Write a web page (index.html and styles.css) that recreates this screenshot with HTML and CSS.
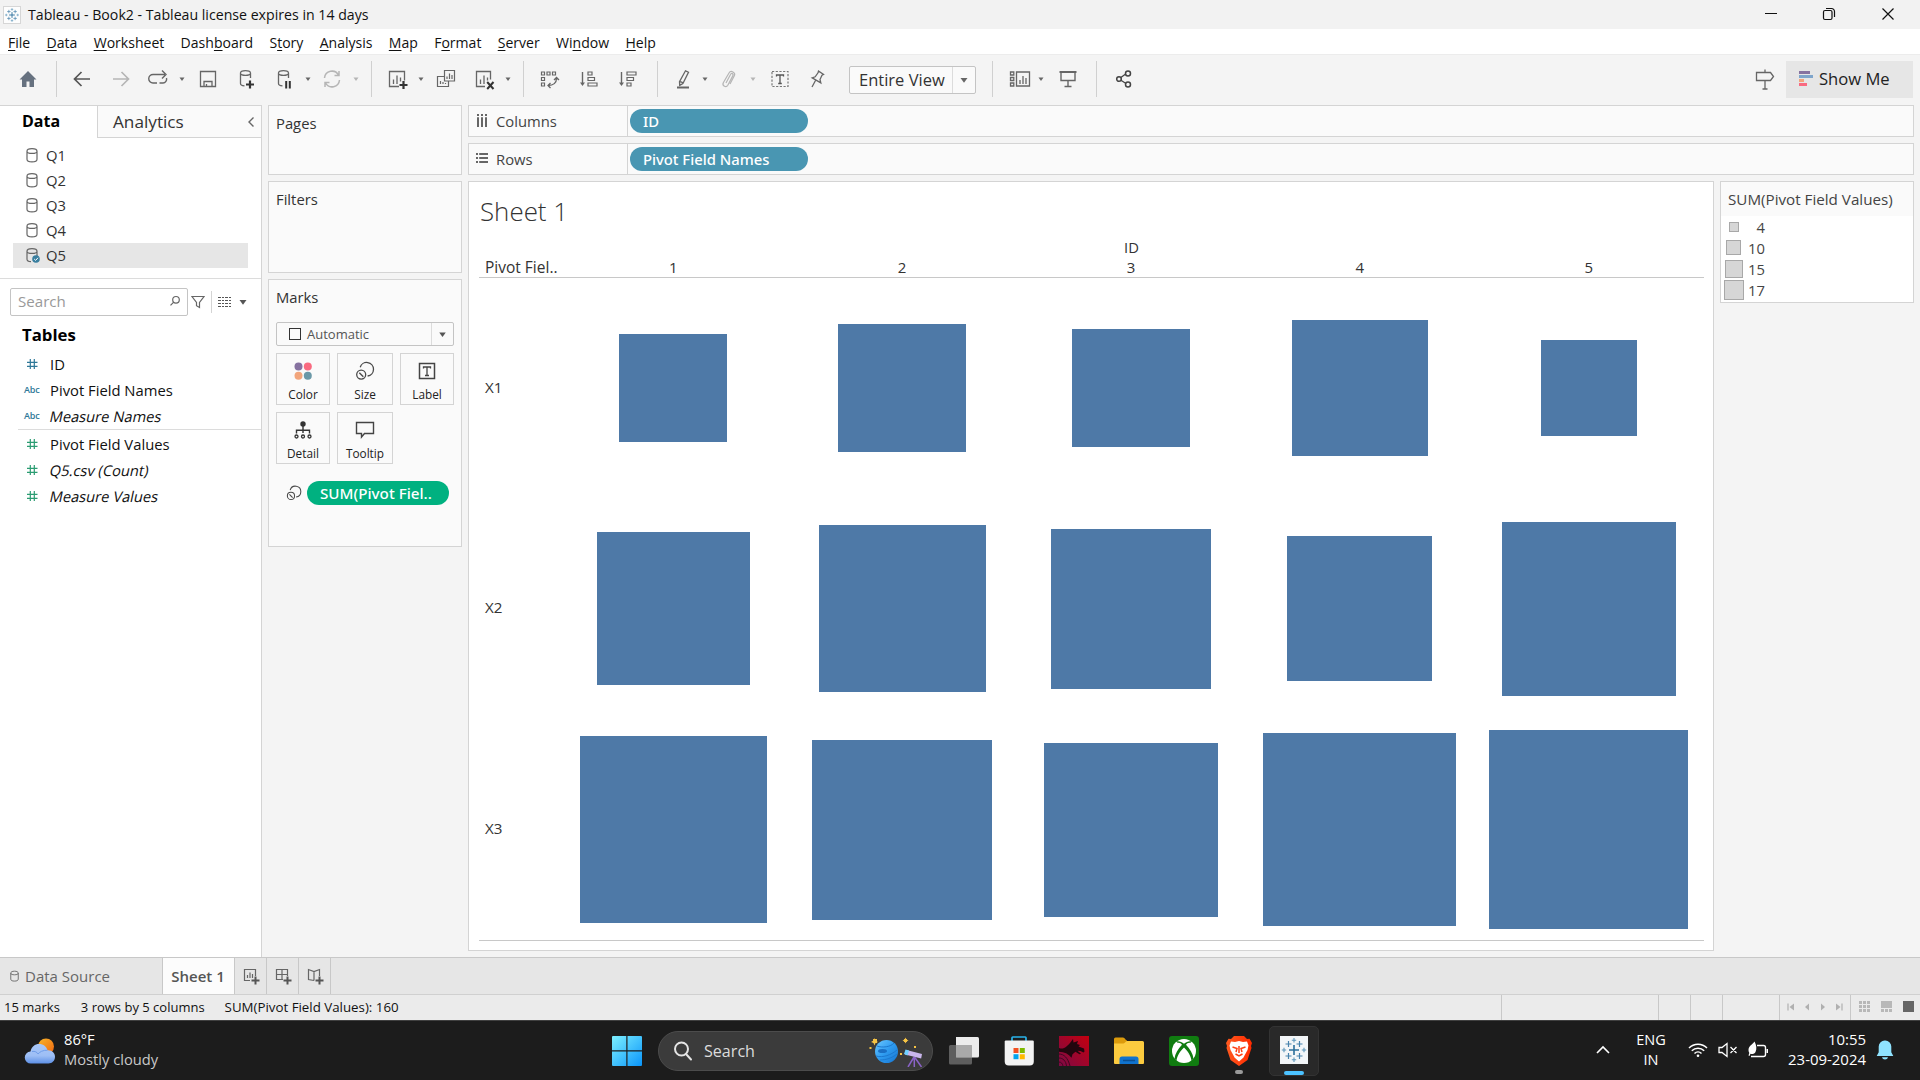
FILE: index.html
```html
<!DOCTYPE html>
<html lang="en">
<head>
<meta charset="utf-8">
<title>Tableau - Book2</title>
<link rel="stylesheet" href="styles.css">
</head>
<body>
<svg class="defs" aria-hidden="true">
  <symbol id="caret" viewBox="0 0 10 10"><path d="M2.500 3.500h5L5 7z" fill="currentColor"/></symbol>
  <symbol id="db" viewBox="0 0 12 16"><path d="M1 4.200v8c0 1.800 2 2.600 5 2.600s5-.8 5-2.600v-8C11 2.500 9 1.600 6 1.600S1 2.500 1 4.200c0 1.500 2 2.200 5 2.200s5-.7 5-2.200" fill="none" stroke="#666" stroke-width="1.200"/></symbol>
  <symbol id="dbpart" viewBox="0 0 12 16"><path d="M5 14.700c-2.500-.1-4-1-4-2.500v-8C1 2.500 3 1.600 6 1.600s5 .9 5 2.600V9M1 4.200c0 1.500 2 2.200 5 2.200s5-.7 5-2.200" fill="none" stroke="#666" stroke-width="1.200"/></symbol>
  <symbol id="hash" viewBox="0 0 12 12"><path d="M4.300 1v10M8.300 1v10M1 4.300h10.500M1 8.300h10.500" fill="none" stroke="currentColor" stroke-width="1.200"/></symbol>
  <symbol id="size" viewBox="0 0 20 20"><path d="M5.200 6.300a6.800 6.800 0 1 1 7.400 8.700" fill="none" stroke="#4a4a4a" stroke-width="1.300"/><circle cx="6.200" cy="13.600" r="4.500" fill="none" stroke="#4a4a4a" stroke-width="1.300"/><path d="M4.300 11.800l4 4" stroke="#4a4a4a" stroke-width="1.400"/></symbol>
  <symbol id="tableau" viewBox="0 0 28 28"><g fill="none"><path d="M14 9v10M9 14h10" stroke="#2b6f9b" stroke-width="1.600"/><path d="M8.500 5v6M5.500 8h6M19.500 5v6M16.500 8h6M8.500 17v6M5.500 20h6M19.500 17v6M16.500 20h6" stroke="#4682ac" stroke-width="1.200"/><path d="M14 2v4.500M11.800 4.200h4.400M14 21.500V26M11.800 23.800h4.400M4 11.800v4.400M1.800 14h4.400M24 11.800v4.400M21.800 14h4.400" stroke="#5d97bb" stroke-width="1.100"/></g></symbol>
</svg>

<header class="titlebar">
  <span class="app-icon"><svg width="16" height="16"><use href="#tableau"/></svg></span>
  <span class="title">Tableau - Book2 - Tableau license expires in 14 days</span>
  <span class="win-controls">
    <svg width="12" height="12" viewBox="0 0 12 12"><path d="M0 5.500h12" stroke="#111"/></svg>
    <svg width="14" height="14" viewBox="0 0 14 14" fill="none" stroke="#111" stroke-width="1.200"><rect x="1.500" y="3.500" width="8.500" height="9" rx="1.500"/><path d="M4 1.500h5.500a3 3 0 0 1 3 3V10"/></svg>
    <svg width="14" height="14" viewBox="0 0 14 14" stroke="#111" stroke-width="1.200"><path d="M1.500 1.500l11 11M12.500 1.500l-11 11"/></svg>
  </span>
</header>

<nav class="menubar">
  <span><u>F</u>ile</span><span><u>D</u>ata</span><span><u>W</u>orksheet</span><span>Dash<u>b</u>oard</span><span>S<u>t</u>ory</span><span><u>A</u>nalysis</span><span><u>M</u>ap</span><span>F<u>o</u>rmat</span><span><u>S</u>erver</span><span>Wi<u>n</u>dow</span><span><u>H</u>elp</span>
</nav>

<div class="toolbar">
  <div class="tb-group">
    <svg class="ic" viewBox="0 0 24 24"><path d="M12 4L3.500 12.500H6V20h4.500v-5.500h3V20H18v-7.500h2.500z" fill="#66717f"/></svg>
  </div>
  <div class="tb-group">
    <svg class="ic" viewBox="0 0 24 24"><path d="M20 12H5M11.500 5L4.500 12l7 7" fill="none" stroke="#555" stroke-width="1.700"/></svg>
    <svg class="ic off" viewBox="0 0 24 24"><path d="M4 12h15M12.500 5l7 7-7 7" fill="none" stroke="currentColor" stroke-width="1.700"/></svg>
    <svg class="ic g13" viewBox="0 0 24 24"><path d="M11 16H7a4.200 4.200 0 0 1 0-8.500h12M16 3.500l4 4-4 4M13.500 16H17a4 4 0 0 0 3.500-5" fill="none" stroke="#666" stroke-width="1.400"/></svg>
    <svg class="car"><use href="#caret"/></svg>
    <svg class="ic g9" viewBox="0 0 24 24"><path d="M4.500 4.500h15v15h-15zM8 19.500v-5h8v5M10.500 19.500V17" fill="none" stroke="#666" stroke-width="1.300"/></svg>
    <svg class="ic g14" viewBox="0 0 24 24"><path d="M16.500 11V6c0-3.200-10-3.200-10 0v10.500c0 1.700 1.600 2.200 4 2.400M6.500 6.500c1 2.500 9 2.500 10 0" fill="none" stroke="#666" stroke-width="1.300"/><path d="M16 13.500v8M12 17.500h8" stroke="#333" stroke-width="2.200"/></svg>
    <svg class="ic g14" viewBox="0 0 24 24"><path d="M16.500 11V6c0-3.200-10-3.200-10 0v10.500c0 1.700 1.600 2.200 4 2.400M6.500 6.500c1 2.500 9 2.500 10 0" fill="none" stroke="#666" stroke-width="1.300"/><path d="M14.200 14v7.500M17.800 14v7.500" stroke="#333" stroke-width="2"/></svg>
    <svg class="car"><use href="#caret"/></svg>
    <svg class="ic g7 off" viewBox="0 0 24 24"><path d="M4.500 11a7.500 7.500 0 0 1 14-3M19.500 13a7.500 7.500 0 0 1-14 3M19 4v4.500h-4.500M5 20v-4.500h4.500" fill="none" stroke="currentColor" stroke-width="1.500"/></svg>
    <svg class="car off"><use href="#caret"/></svg>
  </div>
  <div class="tb-group g10">
    <svg class="ic" viewBox="0 0 24 24"><path d="M14 19.500H4.500v-15h15v9M8.500 12.500V17M12 8.500V17M15.500 10.500v4" fill="none" stroke="#666" stroke-width="1.300"/><path d="M18.500 14v8M14.500 18h8" stroke="#333" stroke-width="2.200"/></svg>
    <svg class="car"><use href="#caret"/></svg>
    <svg class="ic g8" viewBox="0 0 24 24"><path d="M10.500 3.500h10v10.500h-10zM10.500 9.500h-7v10h11V14M13 9.500V12M15.500 6.500V12M18 8V12M6.500 14v3M9 15v2M11.500 16v1" fill="none" stroke="#666" stroke-width="1.200"/></svg>
    <svg class="ic g14" viewBox="0 0 24 24"><path d="M13 19.500H4.500v-15h14v8M8.500 12.500V17M12 8.500V17M15.500 10.500v3" fill="none" stroke="#666" stroke-width="1.300"/><path d="M15.200 15l6.300 7M21.500 15l-6.300 7" stroke="#333" stroke-width="2"/></svg>
    <svg class="car"><use href="#caret"/></svg>
  </div>
  <div class="tb-group g10">
    <svg class="ic" viewBox="0 0 24 24"><path d="M4.500 5h3v3h-3zM10 5h3v3h-3zM15.500 5h3v3h-3zM4.500 10.500h3v3h-3zM4.500 16h3v3h-3z" fill="none" stroke="#666" stroke-width="1.200"/><path d="M19.500 11.500c0 4-3 7-8.500 7M17 13l2.500-2.500L22 13M13.500 16L11 18.500l2.500 2.500" fill="none" stroke="#666" stroke-width="1.300"/></svg>
    <svg class="ic g16" viewBox="0 0 24 24"><path d="M5.500 5v12" stroke="#666" stroke-width="1.400"/><path d="M3 15.500h5L5.500 19z" fill="#666"/><path d="M11 5h4v3h-4zM11 10.500h6.500v3H11zM11 16h9v3h-9z" fill="none" stroke="#666" stroke-width="1.200"/></svg>
    <svg class="ic g15" viewBox="0 0 24 24"><path d="M5.500 5v12" stroke="#666" stroke-width="1.400"/><path d="M3 15.500h5L5.500 19z" fill="#666"/><path d="M11 5h9v3h-9zM11 10.500h6.500v3H11zM11 16h4v3h-4z" fill="none" stroke="#666" stroke-width="1.200"/></svg>
  </div>
  <div class="tb-group g17b">
    <svg class="ic" viewBox="0 0 24 24"><path d="M14.500 3.800l3 1.400-5.600 11.300-3.200 1.800-.2-3.600zM8.700 14.300l3 1.400" fill="none" stroke="#666" stroke-width="1.300"/><path d="M6 20.500h12" stroke="#666" stroke-width="2"/></svg>
    <svg class="car g5"><use href="#caret"/></svg>
    <svg class="ic g7 off" viewBox="0 0 24 24"><path d="M9 16l4.500-8.500c1-2 3.300-.8 2.300 1.200l-5 9.500c-1.600 2.800-6 .7-4.500-2.400L12 6c1.800-3.200 7-.6 5.300 2.800L13 17" fill="none" stroke="currentColor" stroke-width="1.200"/></svg>
    <svg class="car off"><use href="#caret"/></svg>
    <svg class="ic g10" viewBox="0 0 24 24"><path d="M4 4.500h16v15H4z" fill="none" stroke="#777" stroke-width="1.200" stroke-dasharray="2.200 1.500"/><path d="M8.500 9.500V8h7v1.500M12 8v8.500M10.200 16.500h3.600" fill="none" stroke="#555" stroke-width="1.300"/></svg>
    <svg class="ic g13" viewBox="0 0 24 24"><path d="M13.500 4l5 3.500-1.500.7-2 4.300.8 3.300-8.600-5 3-1 2.800-4zM10.500 13.500L7 20" fill="none" stroke="#666" stroke-width="1.300"/></svg>
    <div class="fit-select"><span>Entire View</span><i><svg width="14" height="14"><use href="#caret"/></svg></i></div>
  </div>
  <div class="tb-group g17">
    <svg class="ic" viewBox="0 0 24 24"><path d="M2.500 5h3.300v3H2.500zM2.500 10.500h3.300v3H2.500zM2.500 16h3.300v3H2.500zM8.500 5h13v14h-13zM12 13v4M15 9v8M18 11v6" fill="none" stroke="#666" stroke-width="1.300"/></svg>
    <svg class="car g4"><use href="#caret"/></svg>
    <svg class="ic g10" viewBox="0 0 24 24"><path d="M3.500 5h17" stroke="#666" stroke-width="2"/><path d="M5 5.500v8h14v-8M12 13.500V19M8.500 19.500h7" fill="none" stroke="#666" stroke-width="1.400"/></svg>
  </div>
  <div class="tb-group g17">
    <svg class="ic" viewBox="0 0 24 24"><path d="M8.500 10.700l5.500-4M8.500 13l5.500 3.500" stroke="#444" stroke-width="1.300"/><g fill="none" stroke="#444" stroke-width="1.500"><circle cx="7" cy="12" r="2.300"/><circle cx="16" cy="6.500" r="2.500"/><circle cx="16" cy="17.500" r="2.500"/></g></svg>
  </div>
  <svg class="ic guide" viewBox="0 0 24 24"><path d="M3.500 5.500h14l3 4-3 4h-14zM12 2.500v3M12 13.500V22M9.500 22h5" fill="none" stroke="#666" stroke-width="1.300"/></svg>
  <div class="show-me">
    <svg width="14" height="16" viewBox="0 0 14 16"><path d="M0 0h11v3H0z" fill="#8672a0"/><path d="M0 4h14v3H0z" fill="#7fa5cb"/><path d="M0 8h5v3H0z" fill="#f2a57c"/><path d="M0 12h8v3H0z" fill="#f96a80"/></svg>
    <span>Show Me</span>
  </div>
</div>

<main class="workspace">
  <aside class="data-pane">
    <div class="pane-tabs"><b>Data</b><div class="tab-analytics">Analytics<svg width="8" height="12" viewBox="0 0 8 12"><path d="M6.500 1.500L2 6l4.500 4.500" fill="none" stroke="#666" stroke-width="1.400"/></svg></div></div>
    <ul class="sources">
      <li><svg class="dbi"><use href="#db"/></svg>Q1</li>
      <li><svg class="dbi"><use href="#db"/></svg>Q2</li>
      <li><svg class="dbi"><use href="#db"/></svg>Q3</li>
      <li><svg class="dbi"><use href="#db"/></svg>Q4</li>
      <li class="sel"><svg class="dbi"><use href="#dbpart"/></svg>Q5<svg class="badge" viewBox="0 0 10 10"><circle cx="5" cy="5" r="3.800" fill="#3a7f9f"/><path d="M3.200 5l1.400 1.400L7 3.800" fill="none" stroke="#fff"/></svg></li>
    </ul>
    <div class="search-row">
      <div class="search"><span>Search</span><svg width="12" height="12" viewBox="0 0 12 12" fill="none" stroke="#666" stroke-width="1.200"><circle cx="7" cy="4.800" r="3.300"/><path d="M4.700 7.100L1.500 10.300"/></svg></div>
      <svg class="funnel" width="14" height="14" viewBox="0 0 14 14"><path d="M1 1.500h12L8.500 7.500v5l-3-1.800V7.500z" fill="none" stroke="#666" stroke-width="1.200"/></svg>
      <svg class="list" width="13" height="10" viewBox="0 0 13 10"><path d="M0 .5h13M0 3.500h13M0 6.500h13M0 9.500h13" stroke="#555" stroke-dasharray="3 1 2 1"/></svg>
      <svg class="lc" width="14" height="14"><use href="#caret"/></svg>
    </div>
    <h3>Tables</h3>
    <ul class="fields dims">
      <li><svg class="hash"><use href="#hash"/></svg>ID</li>
      <li><small>Abc</small>Pivot Field Names</li>
      <li><small>Abc</small><em>Measure Names</em></li>
    </ul>
    <ul class="fields meas">
      <li><svg class="hash"><use href="#hash"/></svg>Pivot Field Values</li>
      <li><svg class="hash"><use href="#hash"/></svg><em>Q5.csv (Count)</em></li>
      <li><svg class="hash"><use href="#hash"/></svg><em>Measure Values</em></li>
    </ul>
  </aside>

  <section class="cards">
    <div class="card pages">Pages</div>
    <div class="card filters">Filters</div>
    <div class="card marks">
      <div>Marks</div>
      <div class="mark-type"><i class="sq"></i><span>Automatic</span><i class="dd"><svg width="13" height="13"><use href="#caret"/></svg></i></div>
      <div class="mark-buttons">
        <div><svg viewBox="0 0 20 20"><circle cx="5.500" cy="5.500" r="4" fill="#8672a0"/><circle cx="14.800" cy="5.500" r="4" fill="#f96a80"/><circle cx="5.500" cy="14.700" r="4" fill="#f2a57c"/><circle cx="14.800" cy="14.700" r="4" fill="#6b98a7"/></svg>Color</div>
        <div><svg><use href="#size"/></svg>Size</div>
        <div><svg viewBox="0 0 20 20"><path d="M2.500 2.500h15v15h-15z" fill="none" stroke="#444" stroke-width="1.500"/><path d="M6.500 7.500V6h7v1.500M10 6v8.500M8 14.500h4" fill="none" stroke="#444" stroke-width="1.300"/></svg>Label</div>
        <div><svg viewBox="0 0 20 20"><circle cx="10" cy="4" r="2.700" fill="#333"/><path d="M10 6v7M3.500 13.500v-3.200h13v3.200" fill="none" stroke="#333" stroke-width="1.400"/><g fill="none" stroke="#333" stroke-width="1.300"><circle cx="3.500" cy="16.500" r="1.500"/><circle cx="10" cy="16.500" r="1.500"/><circle cx="16.500" cy="16.500" r="1.500"/></g></svg>Detail</div>
        <div><svg viewBox="0 0 20 20"><path d="M1.500 2.500h17v11h-9L6.500 17v-3.500h-5z" fill="none" stroke="#444" stroke-width="1.400"/></svg>Tooltip</div>
      </div>
      <div class="encoding"><svg><use href="#size"/></svg><span class="pill green">SUM(Pivot Fiel..</span></div>
    </div>
  </section>

  <section class="main">
    <div class="shelf"><div class="shelf-name"><svg width="12" height="14" viewBox="0 0 12 14"><path d="M2 0v2M6 0v2M10 0v2M2 3.200V13M6 3.200V13M10 3.200V13" stroke="#666" stroke-width="2"/></svg>Columns</div><span class="pill">ID</span></div>
    <div class="shelf"><div class="shelf-name"><svg width="12" height="12" viewBox="0 0 12 12"><path d="M0 1h2M0 5h2M0 9h2M3.200 1H12M3.200 5H12M3.200 9H12" stroke="#666" stroke-width="2"/></svg>Rows</div><span class="pill">Pivot Field Names</span></div>
    <div class="view-row">
      <div class="viz">
        <h1>Sheet 1</h1>
        <div class="col-title">ID</div>
        <div class="crosstab head"><span class="rh">Pivot Fiel..</span><span>1</span><span>2</span><span>3</span><span>4</span><span>5</span></div>
        <div class="crosstab body">
          <span class="rh">X1</span>
          <div><i style="width:108px"></i></div><div><i style="width:128px"></i></div><div><i style="width:118px"></i></div><div><i style="width:136px"></i></div><div><i style="width:96px"></i></div>
          <span class="rh">X2</span>
          <div><i style="width:153px"></i></div><div><i style="width:167px"></i></div><div><i style="width:160px"></i></div><div><i style="width:145px"></i></div><div><i style="width:174px"></i></div>
          <span class="rh">X3</span>
          <div><i style="width:187px"></i></div><div><i style="width:180px"></i></div><div><i style="width:174px"></i></div><div><i style="width:193px"></i></div><div><i style="width:199px"></i></div>
        </div>
      </div>
      <div class="legend">
        <div class="legend-title">SUM(Pivot Field Values)</div>
        <ul>
          <li><span><i style="width:10px"></i></span><b>4</b></li>
          <li><span><i style="width:15px"></i></span><b>10</b></li>
          <li><span><i style="width:18px"></i></span><b>15</b></li>
          <li><span><i style="width:20px"></i></span><b>17</b></li>
        </ul>
      </div>
    </div>
  </section>
</main>

<div class="sheet-tabs">
  <div class="ds"><svg width="9" height="12"><use href="#db"/></svg>Data Source</div>
  <div class="active">Sheet 1</div>
  <div class="new"><svg viewBox="0 0 18 18"><path d="M8 13.500H2.500v-11h11V9M5.500 8v3M8 5.500V11M10.500 7v4" fill="none" stroke="#666" stroke-width="1.200"/><path d="M13.500 9.500v8M9.500 13.500h8" stroke="#555" stroke-width="2"/></svg></div>
  <div class="new"><svg viewBox="0 0 18 18"><path d="M9 12.500H2.500v-10h11V9M2.500 7.500h11M8 2.500v10" fill="none" stroke="#666" stroke-width="1.200"/><path d="M13.500 9.500v8M9.500 13.500h8" stroke="#555" stroke-width="2"/></svg></div>
  <div class="new"><svg viewBox="0 0 18 18"><path d="M8 13.500l-5.500-1v-10L8 4.500l5.500-2V9M8 4.500v9" fill="none" stroke="#666" stroke-width="1.200"/><path d="M13.500 9.500v8M9.500 13.500h8" stroke="#555" stroke-width="2"/></svg></div>
</div>

<footer class="status">
  <span>15 marks</span><span>3 rows by 5 columns</span><span>SUM(Pivot Field Values): 160</span>
  <div class="cells">
    <i class="c1"></i><i class="c2"></i><i class="c2"></i><i class="c3"></i>
    <div class="nav">
      <svg viewBox="0 0 8 8"><path d="M1 .5v7" stroke="#b0b0b0" stroke-width="1.200"/><path d="M7 .5v7L2.500 4z" fill="#b0b0b0"/></svg>
      <svg viewBox="0 0 8 8"><path d="M6 .5v7L2 4z" fill="#b0b0b0"/></svg>
      <svg viewBox="0 0 8 8"><path d="M2 .5v7L6 4z" fill="#b0b0b0"/></svg>
      <svg viewBox="0 0 8 8"><path d="M7 .5v7" stroke="#b0b0b0" stroke-width="1.200"/><path d="M1 .5v7L5.500 4z" fill="#b0b0b0"/></svg>
    </div>
    <div class="views">
      <svg viewBox="0 0 11 11"><path d="M0 1.500h11M0 5.500h11M0 9.500h11" stroke="#b8b8b8" stroke-width="3" stroke-dasharray="3 1"/></svg>
      <svg viewBox="0 0 11 11"><path d="M0 0h11v7H0z" fill="#b8b8b8"/><path d="M0 9.500h11" stroke="#b8b8b8" stroke-width="3" stroke-dasharray="3 1"/></svg>
      <svg viewBox="0 0 11 11"><path d="M0 0h11v11H0z" fill="#666"/></svg>
    </div>
  </div>
</footer>

<div class="taskbar">
  <div class="weather">
    <svg width="32" height="28" viewBox="0 0 32 28"><defs><linearGradient id="sun" x1="0" y1="0" x2="1" y2="1"><stop offset="0" stop-color="#f7b52b"/><stop offset="1" stop-color="#f0660f"/></linearGradient><linearGradient id="cl" x1="0" y1="0" x2="0" y2="1"><stop offset="0" stop-color="#a9c7f8"/><stop offset=".6" stop-color="#9dbef5"/><stop offset="1" stop-color="#5d90e6"/></linearGradient></defs><circle cx="22" cy="9.500" r="8" fill="url(#sun)"/><path d="M7 26.500a6 6 0 0 1-.5-12C7.500 9.500 11 7 15 7c4.500 0 7.500 2.700 8.500 6.200 4.500-.4 7.500 2.800 7.500 6.600 0 4-3 6.700-6.500 6.700z" fill="url(#cl)"/><path d="M8 14.500c3-.5 5 .5 6 2.500 1.500-2 5-4 9.500-3.800" fill="none" stroke="#6f9de9"/></svg>
    <div class="readout"><div>86°F</div><div class="cond">Mostly cloudy</div></div>
  </div>
  <div class="apps">
    <svg width="30" height="30" viewBox="0 0 30 30"><defs><linearGradient id="w" x1="0" y1="0" x2="1" y2="1"><stop offset="0" stop-color="#7df0ff"/><stop offset="1" stop-color="#0a95fa"/></linearGradient></defs><path d="M1 0h13.300v14.300H0V1a1 1 0 0 1 1-1zM15.500 0H29a1 1 0 0 1 1 1v13.300H15.500zM0 15.500h14.300V30H1a1 1 0 0 1-1-1zM15.500 15.500H30V29a1 1 0 0 1-1 1H15.500z" fill="url(#w)"/></svg>
    <div class="tsearch">
      <svg width="20" height="20" viewBox="0 0 20 20" fill="none" stroke="#e4e4e4" stroke-width="2"><circle cx="8.500" cy="8" r="6.500"/><path d="M13 13l5 5.500" stroke-linecap="round"/></svg>
      <span>Search</span>
      <svg class="deco" width="56" height="32" viewBox="0 0 56 32"><defs><linearGradient id="pl" x1="0" y1="0" x2="1" y2="1"><stop offset="0" stop-color="#6cc8ff"/><stop offset=".5" stop-color="#2e9bf0"/><stop offset="1" stop-color="#1673cf"/></linearGradient></defs><circle cx="18.500" cy="16.500" r="11.500" fill="url(#pl)"/><path d="M9 11c5 2 14 1 17-3M8 21c7 2 15-1 21-6M12 25c6 0 12-2 17-6" fill="none" stroke="#1b78cf" stroke-width="1"/><ellipse cx="14.500" cy="16" rx="4.500" ry="2" fill="#1a6fc4"/><path d="M5 4h4v4H5zM36 4h3v3h-3zM46 11h2v2h-2zM32 18h2v2h-2zM1.500 12h2v2h-2z" fill="#f6c344"/><path d="M6.500 3l1 2.500L10 7l-2.500 1-1 2.500-1-2.500L3 7l2.500-1.500zM37.500 2.500l1 2 2 1-2 1-1 2-1-2-2-1 2-1z" fill="#f6c344"/><path d="M46 22l-6 10M46.500 22l7 10M46.300 22v10" stroke="#8a63c7" stroke-width="1.500"/><path d="M38.500 15l15.500 4-.8 4.500-16.200-4z" fill="#c9b6ec"/><path d="M37.500 14.500l3.500 1-1.500 5-3.500-1.500z" fill="#6fd0ff"/></svg>
    </div>
    <svg width="30" height="28" viewBox="0 0 30 28"><path d="M8.500 0h20a1.500 1.500 0 0 1 1.500 1.500V19a1.500 1.500 0 0 1-1.500 1.500h-20A1.500 1.500 0 0 1 7 19V0z" fill="#ececec"/><path d="M1.500 8h20A1.500 1.500 0 0 1 23 9.500V26a1.500 1.500 0 0 1-1.500 1.500h-20A1.500 1.500 0 0 1 0 26V9.500A1.500 1.500 0 0 1 1.500 8z" fill="#6f6f6f" fill-opacity=".8"/><path d="M7 8h15a1 1 0 0 1 1 1v11.500H7z" fill="#a9a9a9"/></svg>
    <svg class="t25" width="30" height="30" viewBox="0 0 30 30"><path d="M8 6V1.800A.8.8 0 0 1 8.800 1h12.400a.8.8 0 0 1 .8.800V6" fill="none" stroke="#29b3ea" stroke-width="1.700"/><path d="M1.500 4.500h27A1.300 1.300 0 0 1 29.800 6v19.500a4 4 0 0 1-4 4H4.700a4 4 0 0 1-4-4V6a1.300 1.300 0 0 1 .8-1.500z" fill="#f3f3f3"/><path d="M9.500 12h5v5h-5z" fill="#f25022"/><path d="M15.800 12h5v5h-5z" fill="#7fba00"/><path d="M9.500 18.200h5v5h-5z" fill="#00a4ef"/><path d="M15.800 18.200h5v5h-5z" fill="#ffb900"/></svg>
    <svg class="t25" width="30" height="30" viewBox="0 0 30 30"><defs><linearGradient id="dr" x1="1" y1="0" x2="0" y2="1"><stop offset="0" stop-color="#c4000f"/><stop offset="1" stop-color="#7d0a45"/></linearGradient></defs><path d="M0 0h30v30H0z" fill="url(#dr)"/><path d="M0 12c5 2 8-2 11-5l3-4 .5 3.500L19 5l-1 3 3 1-1.500 1.500 5.500 2 .5 3-1 1-3-1.500-3-.3 3.500 3-1.500.5-4-2.500-3 2.500-1 3.500c-3-4-7-6-12.500-6z" fill="#22060e"/><path d="M0 18c5 0 9 4 11 12M0 22c4 0 7 3 7.500 8M0 26c2 0 3.500 1.500 4 4" fill="none" stroke="#3f0820"/></svg>
    <svg class="t25" width="30" height="28" viewBox="0 0 30 28"><path d="M0 2a1.500 1.500 0 0 1 1.500-1.500H9c2 0 2.500 3 4 3v5H0z" fill="#dc9b0c"/><path d="M0 6.500h9.500c1.500 0 2-2.500 3.500-2.500h15.500A1.500 1.500 0 0 1 30 5.500V26a1 1 0 0 1-1 1H1a1 1 0 0 1-1-1z" fill="#fccb3f"/><path d="M5.500 27v-5a2.500 2.500 0 0 1 2.500-2.500h14a2.500 2.500 0 0 1 2.500 2.500v5z" fill="#1073ce"/><path d="M9 23.500h12" stroke="#0a4f93" stroke-width="1.500"/></svg>
    <svg class="t25" width="30" height="30" viewBox="0 0 30 30"><rect width="30" height="30" rx="3" fill="#107c10"/><circle cx="15" cy="15" r="12" fill="#fff"/><path d="M7 5.500c3-1 5.500.5 8 2.300 2.500-1.800 5-3.300 8-2.300l-2 1.500c-1.500-.5-3 .5-4 1.800 4 4 7 9 7.500 14l-2 2C22 20 19 15 15 11.500 11 15 8 20 7.500 24.800l-2-2C6 17.800 9 12.800 13 8.800 12 7.500 10.500 6.500 9 7z" fill="#107c10"/></svg>
    <div class="brave"><svg width="26" height="30" viewBox="0 0 26 30"><defs><linearGradient id="br"><stop offset="0" stop-color="#ff5a1f"/><stop offset="1" stop-color="#ff2a00"/></linearGradient></defs><path d="M8 0h10l3 3 2.500-.3L26 7l-1 3 .5 2-4 12-8.500 6-8.500-6-4-12 .5-2L0 7l2.500-4.300L5 3z" fill="url(#br)"/><path d="M5 5.500l4 .5 4-1 4 1 4-.5 1.500 4-1 4.500-3 5.500-1 2L13 25.500 8.500 21.500l-1-2-3-5.500-1-4.500z" fill="#fff"/><path d="M6.500 11l4.500 1.500L10 16M19.500 11L15 12.500l1 3.500M13 10v7M9.500 18l3.500 2 3.500-2" fill="none" stroke="#ff4014" stroke-width="1.500"/></svg><i></i></div>
    <div class="tile"><span><svg width="28" height="28"><use href="#tableau"/></svg></span><i></i></div>
  </div>
  <div class="tray">
    <svg width="14" height="10" viewBox="0 0 14 10"><path d="M1 8l6-6 6 6" fill="none" stroke="#fff" stroke-width="1.600"/></svg>
    <div class="lang">ENG<br>IN</div>
    <svg class="wifi" width="20" height="16" viewBox="0 0 20 16" fill="none" stroke="#fff" stroke-width="1.500"><path d="M1 6a12.500 12.500 0 0 1 18 0M3.800 8.800a8.700 8.700 0 0 1 12.400 0M6.500 11.500a5 5 0 0 1 7 0"/><circle cx="10" cy="13.800" r="1.300" fill="#fff" stroke="none"/></svg>
    <svg class="mute" width="20" height="16" viewBox="0 0 20 16" fill="none" stroke="#fff" stroke-width="1.300"><path d="M1 5.500h3L9 1.500v13l-5-4H1zM12.500 5l6 6M18.500 5l-6 6"/></svg>
    <svg width="22" height="18" viewBox="0 0 22 18"><path d="M10 4.500h6.500a2 2 0 0 1 2 2v7a2 2 0 0 1-2 2H4" fill="none" stroke="#fff" stroke-width="1.400"/><path d="M19.500 8h1.500v4h-1.500zM1.500 9C1.500 5 5 4 7.500.5 9.500 4 10 8 8.500 11c-1 2-3.500 2.500-5 1.700L2.500 15 1.500 14.500l.8-2.500c-.6-.8-.8-2-.8-3z" fill="#fff"/></svg>
    <div class="clock">10:55<br>23-09-2024</div>
    <svg width="18" height="20" viewBox="0 0 18 20"><path d="M9 .5a6 6 0 0 1 6.300 6v5.800l2 3.700H.7l2-3.700V6.500A6 6 0 0 1 9 .5zM6 17.300h6c-.5 1.500-1.500 2.200-3 2.200s-2.500-.7-3-2.200z" fill="#8fe3ff"/></svg>
  </div>
</div>
</body>
</html>
```
FILE: styles.css
```css
* { box-sizing: border-box; }
body {
  margin: 0;
  width: 1920px;
  height: 1080px;
  overflow: hidden;
  display: flex;
  flex-direction: column;
  background: #f4f4f4;
  color: #333;
  font: 400 14.8px/20px "Open Sans", "Noto Sans", sans-serif;
}
ul { list-style: none; margin: 0; padding: 0; }
svg { flex: none; display: block; }
i { display: block; }
.defs { width: 0; height: 0; position: absolute; }

/* title bar and menus */
.titlebar { height: 29px; background: #f2f2f2; display: flex; align-items: center; padding: 0 25px 0 3px; flex: none; color: #111; }
.app-icon { width: 18px; height: 18px; background: #fdfdfd; border: 1px solid #d6d6d6; margin-right: 7px; }
.title { font-size: 14.15px; }
.win-controls { margin-left: auto; display: flex; gap: 45px; align-items: center; padding-bottom: 1px; }
.menubar { height: 25px; background: #fff; display: flex; align-items: center; gap: 16.3px; padding: 2px 8px 0; flex: none; color: #111; font-size: 14.05px; }
.menubar u { text-underline-offset: 2px; }

/* toolbar */
.toolbar { height: 51px; flex: none; display: flex; align-items: center; border-top: 1px solid #ececec; padding: 0 7px 2px 0; }
.ic { width: 24px; height: 24px; }
.ic.off, .car.off { color: #b5b5b5; }
.car { width: 10px; height: 10px; color: #666; margin-left: 7px; }
.tb-group { display: flex; align-items: center; padding-left: 13px; margin-left: 13px; height: 36px; border-left: 1px solid #d0d0d0; }
.tb-group:first-child { border: 0; margin-left: 3px; }
.tb-group:first-child + .tb-group { margin-left: 16px; }
.tb-group.g10 { margin-left: 10px; }
.tb-group.g17 { margin-left: 16px; padding-left: 15px; }
.tb-group.g17b { margin-left: 17px; }
.ic + .ic { margin-left: 15px; }
.ic.g7 { margin-left: 7px; }
.ic.g8 { margin-left: 8px; }
.ic.g9 { margin-left: 9px; }
.ic.g10 { margin-left: 10px; }
.ic.g13 { margin-left: 13px; }
.ic.g14 { margin-left: 14px; }
.ic.g15 { margin-left: 15px; }
.ic.g16 { margin-left: 16px; }
.car.g5 { margin-left: 5px; }
.car.g4 { margin-left: 4px; }
.fit-select { display: flex; align-items: center; width: 127px; height: 28px; margin: 1px 0 0 20px; border: 1px solid #c4c4c4; border-radius: 2px; background: #fafafa; padding-left: 9px; font-size: 16.5px; white-space: nowrap; }
.fit-select i { margin-left: auto; width: 23px; height: 26px; border-left: 1px solid #dcdcdc; display: flex; align-items: center; justify-content: center; color: #666; }
.guide { margin-left: auto; margin-right: 9px; }
.show-me { width: 127px; height: 37px; background: #e6e6e6; display: flex; align-items: center; gap: 6px; padding-left: 13px; color: #222; font-size: 16.6px; }

/* workspace */
.workspace { flex: none; height: 852px; display: flex; }
.data-pane { width: 262px; background: #fff; border: 1px solid #d4d4d4; border-width: 1px 1px 0 0; color: #111; }
.pane-tabs { height: 32px; display: flex; }
.pane-tabs b { width: 97px; padding: 5px 0 0 22px; font-size: 16px; color: #000; }
.tab-analytics { flex: 1; border: 1px solid #d4d4d4; border-width: 0 0 1px 1px; background: #fafafa; display: flex; align-items: center; justify-content: space-between; padding: 0 6px 0 15px; font-size: 17.2px; color: #333; }
.sources { padding: 5px 13px 10px 13px; border-bottom: 1px solid #dcdcdc; color: #333; }
.sources li { position: relative; height: 25px; display: flex; align-items: center; gap: 8px; padding: 0 0 2px 13px; }
.sources .sel { background: #e6e6e6; }
.dbi { width: 12px; height: 16px; }
.badge { position: absolute; left: 18px; top: 11px; width: 10px; height: 10px; }
.search-row { display: flex; align-items: center; padding: 9px 0 0 10px; height: 37px; }
.search { width: 178px; height: 28px; border: 1px solid #c4c4c4; border-radius: 2px; display: flex; align-items: center; justify-content: space-between; padding: 0 6px 2px 7px; color: #999; font-size: 15.1px; }
.funnel { margin: 0 6px 0 3px; }
.list { box-sizing: content-box; border-left: 1px solid #d4d4d4; padding: 6px 0 6px 6px; }
.lc { color: #555; margin-left: 5px; }
.data-pane h3 { margin: 9px 0 6px 22px; font-size: 16.8px; line-height: 20px; color: #000; }
.fields li { height: 26px; display: flex; align-items: center; padding-left: 24px; }
.fields .hash { width: 12px; height: 12px; margin: 0 12px 0 2px; }
.fields small { width: 26px; font-size: 9px; font-weight: 600; letter-spacing: -.2px; }
.fields em { font-style: normal; transform: skewX(-12deg); font-size: 14.7px; }
.dims .hash, .dims small { color: #2f7898; }
.meas .hash { color: #2b9c72; }
.meas { border-top: 1px solid #dcdcdc; margin-left: 18px; padding-top: 1px; }
.meas li { padding-left: 6px; }

.cards { width: 194px; margin-left: 6px; display: flex; flex-direction: column; gap: 6px; }
.card { background: #fafafa; border: 1px solid #d4d4d4; padding: 7px 7px 0; }
.pages { height: 70px; }
.filters { height: 92px; }
.marks { height: 268px; }
.mark-type { margin-top: 15px; height: 24px; border: 1px solid #c4c4c4; border-radius: 2px; display: flex; align-items: center; padding-left: 12px; font-size: 13px; color: #555; }
.mark-type .sq { width: 12px; height: 12px; border: 1px solid #333; margin-right: 6px; }
.mark-type .dd { margin-left: auto; width: 22px; height: 22px; border-left: 1px solid #dcdcdc; display: flex; align-items: center; justify-content: center; }
.mark-buttons { margin-top: 7px; display: grid; grid-template: 52px 52px / 54px 56px 54px; gap: 7px; font-size: 11.8px; line-height: 16px; color: #222; }
.mark-buttons div { border: 1px solid #d4d4d4; display: flex; flex-direction: column; align-items: center; padding-top: 7px; gap: 5px; }
.mark-buttons svg { width: 20px; height: 20px; }
.encoding { display: flex; align-items: center; margin: 17px 0 0 10px; gap: 5px; }
.encoding svg { width: 16px; height: 16px; }
.pill { height: 24px; width: 178px; border-radius: 12px; background: #4996b2; color: #fff; padding: 0 13px; line-height: 24px; font-family: "Noto Sans", sans-serif; font-weight: 500; font-size: 14.8px; white-space: nowrap; }
.pill.green { background: #00b180; width: 142px; font-size: 15.2px; }

.main { flex: 1; margin: 0 6px; display: flex; flex-direction: column; gap: 6px; }
.shelf { height: 32px; border: 1px solid #d4d4d4; background: #fafafa; display: flex; align-items: center; gap: 2px; }
.shelf-name { width: 159px; height: 30px; border-right: 1px solid #d4d4d4; display: flex; align-items: center; gap: 8px; padding: 0 0 0 7px; color: #444; }
.view-row { display: flex; gap: 6px; align-items: flex-start; }
.viz { width: 1246px; height: 770px; background: #fff; border: 1px solid #d4d4d4; padding: 0 9px 0 10px; }
.viz h1 { margin: 13px 0 0 1px; height: 42px; line-height: 32px; font-weight: 300; font-size: 25.9px; color: #333; }
.col-title { padding-left: 80px; text-align: center; line-height: 20px; }
.crosstab { display: grid; grid-template-columns: 79.800px repeat(5, 228.875px); width: 1225px; color: #333; }
.crosstab .rh { padding-left: 6px; text-align: left; }
.head { text-align: center; height: 21px; border-bottom: 1px solid #c8c8c8; font-size: 15px; line-height: 20px; white-space: nowrap; }
.head .rh { font-size: 15.5px; }
.body { grid-template-rows: 220.750px 219.750px 222.750px; height: 663px; border-bottom: 1px solid #c8c8c8; align-items: center; font-size: 15.2px; }
.body .rh { padding-bottom: 3px; }
.body div { display: flex; justify-content: center; }
.body i { aspect-ratio: 1; background: #4e79a7; }

.legend { width: 194px; height: 122px; border: 1px solid #d4d4d4; background: #fff; }
.legend-title { height: 34px; background: #fafafa; padding: 7px 0 0 7px; font-size: 15.2px; color: #444; }
.legend li { height: 21px; display: flex; align-items: center; padding-left: 2px; }
.legend li span { width: 21px; display: flex; justify-content: center; }
.legend i { aspect-ratio: 1; background: #d6d6d6; border: 1px solid #a8a8a8; }
.legend b { width: 21px; text-align: right; font-weight: 400; color: #444; }

/* sheet tabs and status bar */
.sheet-tabs { flex: none; height: 37px; background: #e6e6e6; border-top: 1px solid #c8c8c8; display: flex; }
.sheet-tabs div { border-right: 1px solid #c8c8c8; display: flex; align-items: center; }
.sheet-tabs .ds { width: 163px; padding-left: 10px; gap: 6px; color: #666; font-size: 15px; }
.sheet-tabs .active { width: 72px; justify-content: center; background: #fcfcfc; font-weight: 600; font-size: 15px; color: #555; padding: 0 1px 1px 0; }
.new { width: 32px; justify-content: center; }
.new svg { width: 18px; height: 18px; }
.status { flex: none; height: 26px; background: #ebebeb; border-top: 1px solid #d0d0d0; display: flex; align-items: center; padding-left: 4px; gap: 21px; font-size: 13px; color: #111; }
.status > span { padding-bottom: 2px; }
.status > span:nth-child(3) { font-size: 13.3px; margin-left: -1px; }
.cells { margin-left: auto; display: flex; height: 25px; }
.cells > * { border-left: 1px solid #c8c8c8; }
.c1 { width: 157px; }
.c2 { width: 32px; }
.c3 { width: 57px; }
.nav { width: 71px; display: flex; align-items: center; gap: 8px; padding: 0 0 2px 7px; }
.nav svg { width: 8px; height: 8px; }
.views { width: 70px; display: flex; align-items: center; gap: 11px; padding: 0 0 2px 8px; }
.views svg { width: 11px; height: 11px; }

/* desktop taskbar */
.taskbar { flex: none; height: 60px; background: #1c1c1c; border-top: 1px solid #404040; color: #fff; display: flex; align-items: center; font-size: 14.700px; }
.weather { width: 612px; display: flex; align-items: center; padding-left: 24px; gap: 8px; }
.readout { padding-bottom: 4px; }
.cond { color: #c8c8c8; }
.apps { display: flex; align-items: center; }
.tsearch { width: 275px; height: 40px; border-radius: 20px; margin: 0 16px; background: #3b3b3b; border: 1px solid #4c4c4c; display: flex; align-items: center; padding-left: 14px; gap: 11px; font-size: 16.1px; color: #dcdcdc; }
.deco { margin-left: auto; margin-right: 8px; }
.t25 { margin-left: 25px; }
.brave { position: relative; margin: 0 17px 0 27px; }
.brave i { position: absolute; left: 9px; top: 34px; width: 8px; height: 4px; border-radius: 2px; background: #9a9a9a; }
.tile { position: relative; width: 50px; height: 50px; border: 1px solid #333; border-radius: 5px; background: #292929; padding: 9px 10px; }
.tile span { display: block; width: 28px; height: 28px; background: #f3f6f8; }
.tile i { position: absolute; left: 14px; bottom: 0; width: 20px; height: 4px; border-radius: 2px; background: #4cc2ff; }
.tray { margin-left: auto; display: flex; align-items: center; padding: 0 26px 1px 0; line-height: 20px; }
.lang { width: 40px; margin: 0 17px 0 21px; text-align: center; font-size: 14.5px; }
.wifi { margin-right: 10px; }
.mute { margin-right: 9px; }
.clock { width: 97px; text-align: right; margin-right: 10px; padding-bottom: 3px; font-size: 14.95px; }
```
